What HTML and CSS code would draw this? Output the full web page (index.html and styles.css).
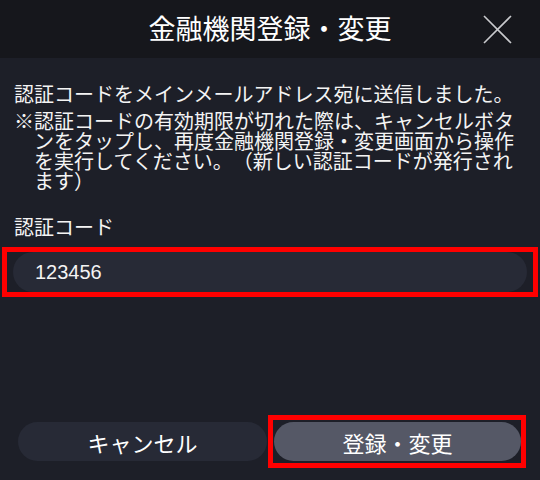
FILE: index.html
```html
<!DOCTYPE html>
<html lang="ja">
<head>
  <meta charset="UTF-8" />
  <meta name="viewport" content="width=device-width, initial-scale=1.0"/>
  <title>金融機関登録・変更</title>
  <link rel="stylesheet" href="styles.css">
</head>
<body>

  <div class="header">
    <span></span>
    <h1 class="title">金融機関登録・変更</h1>
    <button class="close-btn" aria-label="閉じる">
      <svg width="29" height="29" viewBox="0 0 29 29">
        <path d="M1 1 L28 28 M28 1 L1 28" stroke="#c9cacd" stroke-width="1.6" fill="none"/>
      </svg>
    </button>
  </div>

  <div class="content">
    <p class="msg">認証コードをメインメールアドレス宛に送信しました。</p>
    <p class="msg note">※認証コードの有効期限が切れた際は、キャンセルボタンをタップし、再度金融機関登録・変更画面から操作を実行してください。（新しい認証コードが発行されます）</p>

    <label class="field-label" for="code">認証コード</label>
    <div class="field hl">
      <input type="text" id="code" class="code-input" value="123456">
    </div>
  </div>

  <div class="footer">
    <button class="btn btn-cancel">キャンセル</button>
    <div class="btn-wrap hl">
      <button class="btn btn-submit">登録・変更</button>
    </div>
  </div>

</body>
</html>
```

FILE: styles.css
```css
* { margin: 0; padding: 0; box-sizing: border-box; }

body {
  width: 540px;
  height: 480px;
  display: flex;
  flex-direction: column;
  background: #1d1f28;
  color: #f4f4f4;
  font-family: "Noto Sans CJK JP", "Noto Sans", sans-serif;
  text-spacing-trim: space-all;
  overflow: hidden;
}

.header {
  height: 58px;
  background: #16171c;
  display: grid;
  grid-template-columns: 1fr auto 1fr;
  align-items: center;
  padding-bottom: 2px;
}

.title {
  font-size: 27px;
  font-weight: 400;
  line-height: 30px;
  color: #ffffff;
}

.close-btn {
  justify-self: end;
  margin-right: 28px;
  margin-top: 2px;
  width: 29px;
  height: 29px;
  background: none;
  border: none;
  display: flex;
}

.content {
  padding: 26px 14px 0;
}

.msg {
  font-size: 20px;
  line-height: 20px;
}

.note {
  margin-top: 7px;
  padding-left: 20px;
  text-indent: -20px;
}

.field-label {
  display: block;
  margin-top: 26px;
  font-size: 20px;
  line-height: 20px;
}

.hl { border: 5px solid #ff0000; }

.field {
  margin: 10px -12px 0;
  height: 50px;
  padding: 0 6px;
}

.code-input {
  width: 100%;
  height: 40px;
  border: none;
  outline: none;
  border-radius: 20px;
  background: #272a36;
  color: #f4f4f4;
  padding-left: 22px;
  font-family: "Liberation Sans", "Noto Sans CJK JP", sans-serif;
  font-size: 20px;
}

.footer {
  margin-top: auto;
  display: flex;
  align-items: center;
  padding: 0 0 12px 18px;
}

.btn {
  height: 39px;
  border: none;
  border-radius: 20px;
  color: #ffffff;
  font-family: "Noto Sans CJK JP", sans-serif;
  font-size: 22px;
  cursor: pointer;
}

.btn-cancel {
  width: 249px;
  background: #272a36;
}

.btn-wrap {
  margin-left: 1px;
  padding: 2px 0 2px 1px;
}

.btn-submit {
  display: block;
  width: 247px;
  background: #555866;
}
```
